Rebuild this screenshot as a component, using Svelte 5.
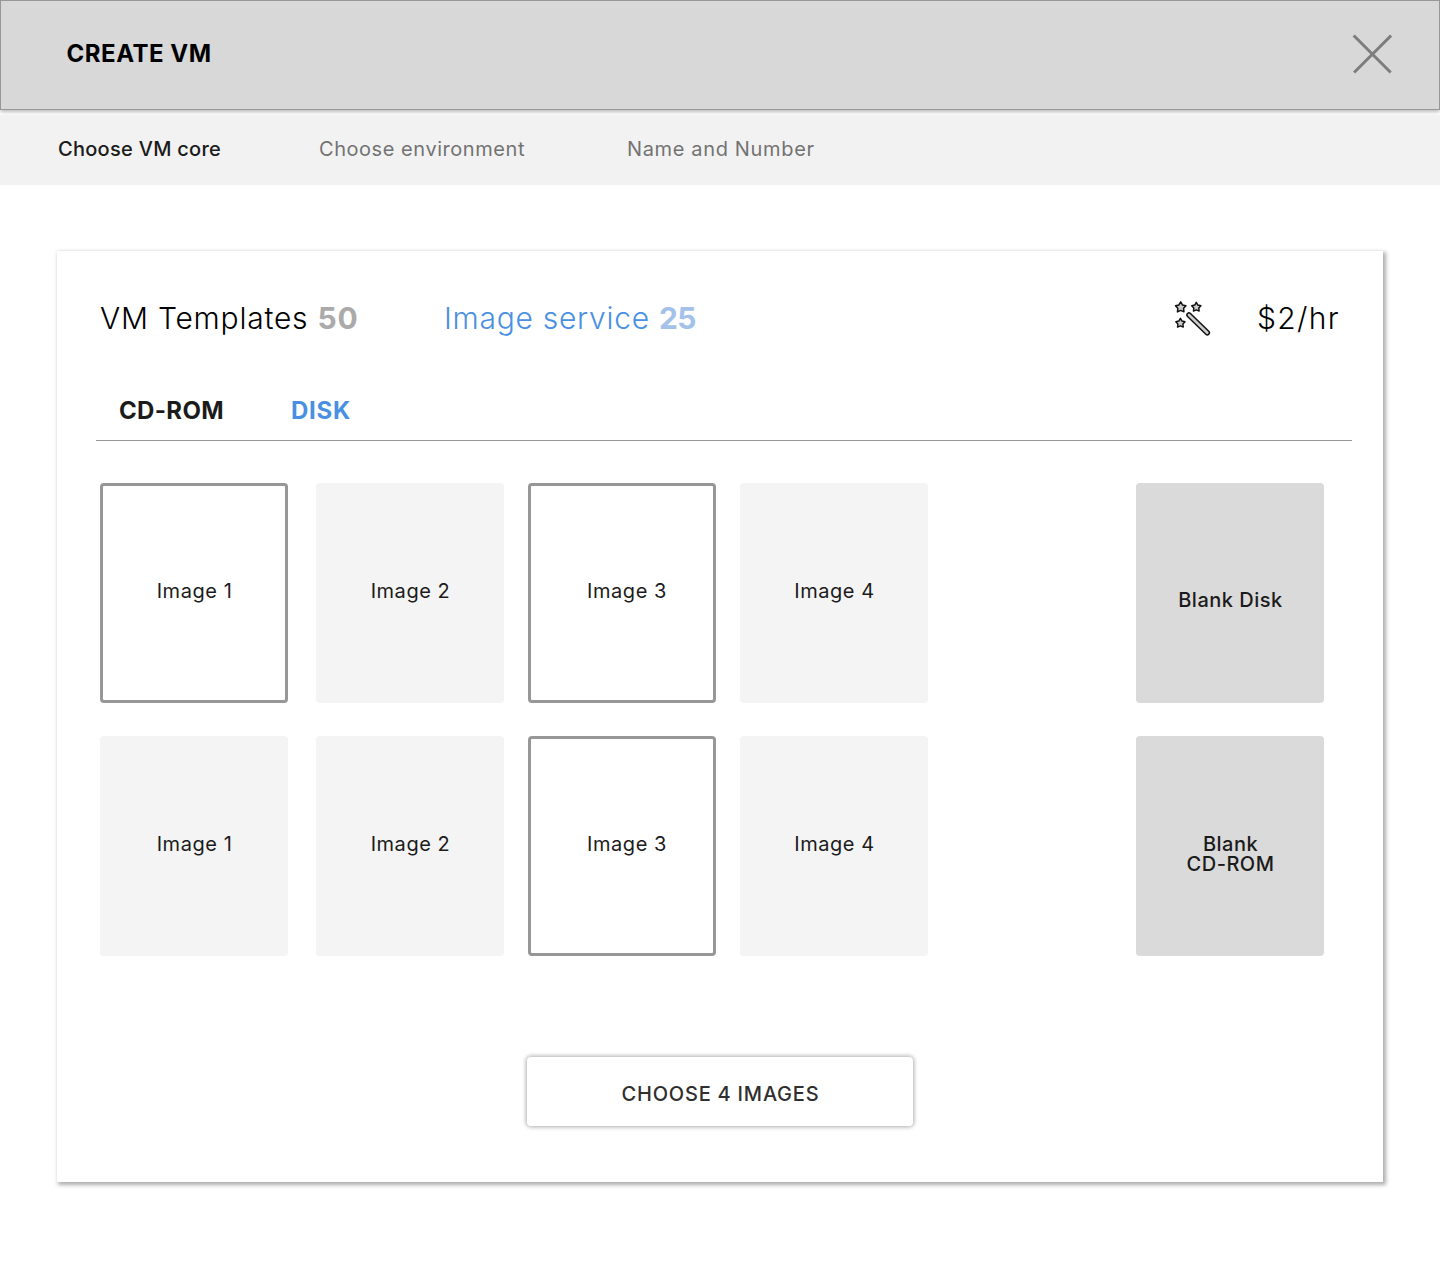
<script>
  const steps = ['Choose VM core', 'Choose environment', 'Name and Number'];
  let step = $state(0);

  let images = $state([
    { name: 'Image 1', selected: true },
    { name: 'Image 2', selected: false },
    { name: 'Image 3', selected: true, shifted: true },
    { name: 'Image 4', selected: false },
    { name: 'Image 1', selected: false },
    { name: 'Image 2', selected: false },
    { name: 'Image 3', selected: true, shifted: true },
    { name: 'Image 4', selected: false }
  ]);

  // Five-pointed star outline around a centre point
  function star(cx, cy, r) {
    return Array.from({ length: 10 }, (_, i) => {
      const a = (Math.PI / 5) * i - Math.PI / 2;
      const d = i % 2 ? r * 0.55 : r;
      return `${(cx + d * Math.cos(a)).toFixed(2)},${(cy + d * Math.sin(a)).toFixed(2)}`;
    }).join(' ');
  }
</script>

<div class="page">
  <header>
    <h1>CREATE VM</h1>
    <button class="close" aria-label="Close">
      <svg width="40" height="40" viewBox="0 0 40 40">
        <path d="M1.7 1.5 38.7 38.5M39.1 1.5 2.1 38.5" />
      </svg>
    </button>
  </header>

  <nav>
    {#each steps as label, i}
      <button class={['step', i === step && 'current']} onclick={() => (step = i)}>{label}</button>
    {/each}
  </nav>

  <main>
    <div class="sources">
      <a class="source templates" href="#templates">VM Templates <b>50</b></a>
      <a class="source service" href="#images">Image service <b>25</b></a>
      <svg class="wand" width="38" height="38" viewBox="0 0 38 38">
        <polygon points={star(7.7, 8.4, 5.5)} />
        <polygon points={star(23.3, 8.2, 4.8)} />
        <polygon points={star(7.4, 24.2, 4.8)} />
        <path class="shell" d="M16 16 34.3 33.8" />
        <path class="core" d="M16 16 34.3 33.8" />
      </svg>
      <span class="price">$2/hr</span>
    </div>

    <div class="tabs">
      <button class="tab cd">CD-ROM</button>
      <button class="tab disk">DISK</button>
    </div>

    <div class="choices">
      <div class="images">
        {#each images as image}
          <button
            class={['card', image.selected && 'selected', image.shifted && 'shifted']}
            onclick={() => (image.selected = !image.selected)}>{image.name}</button>
        {/each}
      </div>
      <div class="blanks">
        <button class="card blank single">Blank Disk</button>
        <button class="card blank"><span>Blank</span><span>CD-ROM</span></button>
      </div>
    </div>

    <button class="choose">CHOOSE 4 IMAGES</button>
  </main>
</div>

<style>
  :global(body) {
    background: #fff;
  }
  .page {
    box-sizing: border-box;
    width: 1440px;
    height: 1285px;
    font-family: Inter, 'Liberation Sans', sans-serif;
    color: #1b1b1b;
  }
  button {
    margin: 0;
    padding: 0;
    border: 0;
    background: none;
    font: inherit;
    color: inherit;
    white-space: nowrap;
    cursor: pointer;
  }
  header {
    box-sizing: border-box;
    display: flex;
    justify-content: space-between;
    align-items: flex-start;
    height: 110px;
    padding: 33px 47px 0 65.5px;
    border: 1px solid #979797;
    background: #d8d8d8;
    box-shadow: 0 2px 4px rgba(0, 0, 0, 0.27);
  }
  h1 {
    margin: 0;
    font-size: 24px;
    font-weight: 700;
    line-height: 40px;
    letter-spacing: 0.52px;
    color: #000;
  }
  .close svg {
    display: block;
    fill: none;
    stroke: #7d7d7d;
    stroke-width: 3;
  }
  nav {
    box-sizing: border-box;
    display: grid;
    grid-template-columns: 261px 308px auto;
    justify-content: start;
    height: 70px;
    margin-top: 5px;
    padding-left: 58px;
    background: #f2f2f2;
  }
  .step {
    height: 68px;
    font-size: 20px;
    text-align: left;
    letter-spacing: 0.55px;
    color: #737373;
  }
  .step:last-child {
    letter-spacing: 0.65px;
  }
  .step.current {
    font-weight: 500;
    letter-spacing: 0.28px;
    color: #1b1b1b;
  }
  main {
    box-sizing: border-box;
    display: flex;
    flex-direction: column;
    width: 1326px;
    height: 931px;
    margin: 66px 0 0 57px;
    padding: 47px 31px 0 39px;
    background: #fff;
    box-shadow: 2px 2px 4px 1px rgba(0, 0, 0, 0.32);
  }
  .sources {
    display: flex;
    align-items: center;
    height: 40px;
    padding-left: 4px;
    font-size: 30px;
    font-weight: 350;
    line-height: 40px;
    color: #000;
  }
  .source {
    width: 344px;
    color: inherit;
    text-decoration: none;
    letter-spacing: 0.77px;
    white-space: nowrap;
  }
  .source b {
    font-weight: 700;
    letter-spacing: 0.9px;
    color: #aaa;
  }
  .service {
    width: 386px;
    color: #4a90e2;
    letter-spacing: 0.72px;
  }
  .service b {
    letter-spacing: -0.6px;
    color: #a4c2e9;
  }
  .wand {
    width: 38px;
    margin-left: 343px;
    fill: #ccc;
    stroke: #111;
    stroke-width: 1.5;
    stroke-linejoin: round;
    stroke-linecap: round;
  }
  .wand .shell {
    stroke-width: 5.6;
  }
  .wand .core {
    stroke: #ccc;
    stroke-width: 2.6;
  }
  .price {
    margin-left: 46px;
    letter-spacing: 1.3px;
  }
  .tabs {
    box-sizing: border-box;
    display: flex;
    height: 103px;
    padding-top: 53px;
    border-bottom: 1px solid #979797;
    font-size: 24px;
    font-weight: 700;
    line-height: 40px;
  }
  .tab {
    height: 40px;
    text-align: left;
  }
  .cd {
    width: 172px;
    margin-left: 23px;
    letter-spacing: 0.35px;
  }
  .disk {
    color: #4a90e2;
    letter-spacing: 0.7px;
  }
  .choices {
    display: flex;
    justify-content: space-between;
    margin: 42px 28px 0 4px;
  }
  .images {
    display: grid;
    grid-template-columns: 216px 212px 212px 188px;
    row-gap: 33px;
  }
  .blanks {
    display: grid;
    row-gap: 33px;
  }
  .card {
    box-sizing: border-box;
    width: 188px;
    height: 220px;
    padding: 0 0 4px 1px;
    border: 3px solid transparent;
    border-radius: 4px;
    background: #f4f4f4 border-box;
    font-size: 20px;
    line-height: 20px;
    letter-spacing: 0.55px;
    text-align: center;
  }
  .card.selected {
    border-color: #979797;
    background: #fff;
  }
  .card.shifted {
    padding-left: 10px;
  }
  .card.blank {
    display: flex;
    flex-direction: column;
    align-items: center;
    justify-content: center;
    gap: 1px;
    padding: 16px 0 0 1px;
    background: #dadada border-box;
    font-weight: 500;
    line-height: 19px;
    letter-spacing: 0.5px;
  }
  .card.single {
    padding-top: 14px;
  }
  .choose {
    align-self: center;
    width: 386px;
    height: 69px;
    margin: 101px 8px 0 0;
    padding: 4px 0 0 1px;
    border-radius: 4px;
    background: #fff;
    box-shadow: 0 0 4px 1px rgba(0, 0, 0, 0.33);
    font-size: 20px;
    font-weight: 500;
    letter-spacing: 0.78px;
    color: #2f2f2f;
  }
</style>
